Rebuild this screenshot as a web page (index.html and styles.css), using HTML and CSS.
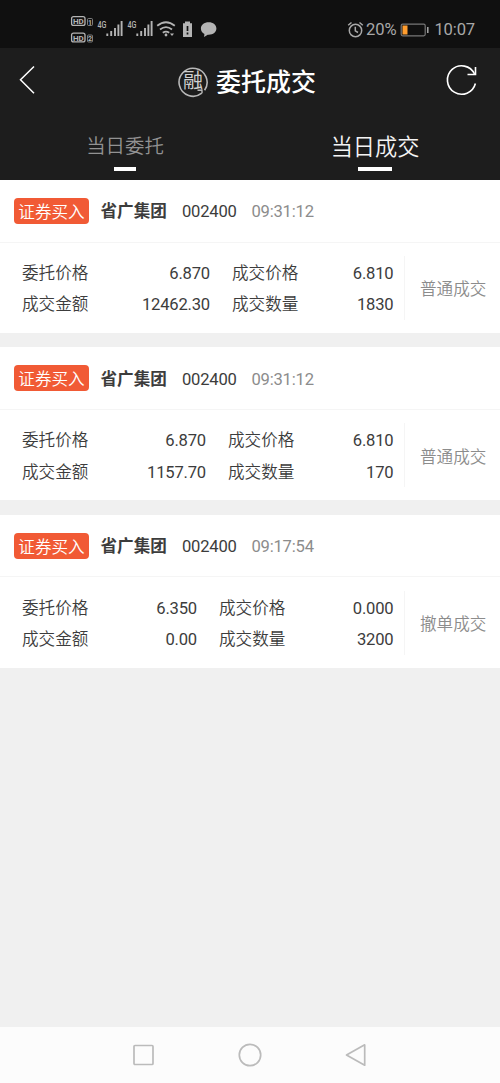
FILE: index.html
```html
<!DOCTYPE html>
<html lang="zh-CN">
<head>
<meta charset="utf-8">
<title>委托成交</title>
<link rel="stylesheet" href="styles.css">
</head>
<body>
<div class="screen">
  <div class="status">
    <svg class="status-left" width="160" height="48" viewBox="60 0 160 48">
      <g fill="none" stroke="#b4b4b4" stroke-width="1.3">
        <rect x="71.6" y="16.6" width="13.4" height="8.8" rx="2"/>
        <rect x="71.6" y="33.1" width="13.4" height="8.8" rx="2"/>
      </g>
      <g class="tiny">
        <text x="73" y="24" textLength="10.800" lengthAdjust="spacingAndGlyphs">HD</text><text x="73" y="40.500" textLength="10.800" lengthAdjust="spacingAndGlyphs">HD</text>
        <text x="88" y="24.600">1</text><text x="88" y="41.100">2</text>
      </g>
      <g fill="none" stroke="#999" stroke-width=".8"><rect x="87.500" y="18.500" width="5" height="7" rx="1"/><rect x="87.500" y="35" width="5" height="7" rx="1"/></g>
      <g class="net"><text x="97.500" y="27.500" textLength="9" lengthAdjust="spacingAndGlyphs">4G</text><text x="127.500" y="27.500" textLength="9" lengthAdjust="spacingAndGlyphs">4G</text></g>
      <path d="M107.300 33.500v2.500M111.200 31v5M115 28v8M118.400 24.500v11.500M121.600 21v15M137.300 33.500v2.500M141.200 31v5M145 28v8M148.400 24.500v11.500M151.600 21v15" stroke="#b4b4b4" stroke-width="1.900" fill="none"/>
      <g fill="none" stroke="#b4b4b4" stroke-width="1.800"><path d="M157.200 25.800q8.800-7.200 17.600 0"/><path d="M160 29.500q6-4.800 12 0"/><path d="M162.800 32.800q3.200-2.400 6.400 0"/></g>
      <circle cx="166" cy="35" r="1.400" fill="#b4b4b4"/><path d="M170 33.500l2 2.500 2-2.500z" fill="#b4b4b4"/>
      <path d="M185 21.500h5v1.800h2V37h-9V23.300h2z" fill="#b4b4b4"/>
      <path d="M187.500 26v5M187.500 32.500v2" stroke="#111" stroke-width="1.700"/>
      <path d="M208.700 22.200c4.500 0 7.700 2.700 7.700 6.300s-3.200 6.200-7.700 6.200l-1 0-3.600 2.300.3-3.100c-2.200-1.200-3.500-3-3.500-5.400 0-3.600 3.300-6.300 7.800-6.300z" fill="#b4b4b4"/>
    </svg>
    <div class="status-right">
      <svg class="alarm" width="18" height="18" viewBox="0 0 18 18" fill="none" stroke="#a8a8a8" stroke-width="1.500"><circle cx="8.500" cy="9.500" r="6.200"/><path d="M8.300 5.800v4l2.700 1.700M1.200 4.300l3.300-2.800M12.500 1.500l3.300 2.800"/></svg>
      <span class="charge">20%</span>
      <svg class="battery" width="30" height="16" viewBox="0 0 30 16"><rect x="1.200" y="2.200" width="24" height="11.600" rx="1.500" fill="none" stroke="#777" stroke-width="1.200"/><path d="M2.500 3.500h5v9h-5z" fill="#ff9d2e"/><path d="M27.800 5v6" stroke="#aaa" stroke-width="1.500"/></svg>
      <span class="clock">10:07</span>
    </div>
  </div>
  <header class="header">
    <svg class="back" width="20" height="32" viewBox="0 0 20 32"><path d="M17 2.500L3.500 15.700l13.500 13.600" fill="none" stroke="#fff" stroke-width="1.500"/></svg>
    <div class="title">
      <svg class="brand" width="32" height="32" viewBox="0 0 32 32"><path d="M24.800 27.200A14 14 0 1 1 27.600 24.200" fill="none" stroke="#b8b8b8" stroke-width="1.600"/><path d="M20.500 24.300h4.500v3" fill="none" stroke="#b8b8b8" stroke-width="1.400"/><text class="seal" x="6" y="22">融</text></svg>
      <h1>委托成交</h1>
    </div>
    <svg class="refresh" width="34" height="34" viewBox="0 0 34 34" fill="none" stroke="#fff" stroke-width="1.600"><path d="M30.400 20.500A14.200 14.200 0 1 1 29.500 11"/><path d="M30.500 4v7.500h-8"/></svg>
  </header>
  <nav class="tabs">
    <div class="tab"><span>当日委托</span></div>
    <div class="tab active"><span>当日成交</span></div>
  </nav>
  <main class="list">
    <section class="card">
      <div class="card-head"><span class="tag">证券买入</span><b class="name">省广集团</b><span class="code">002400</span><span class="time">09:31:12</span></div>
      <div class="card-body">
        <div class="figures wide"><span>委托价格</span><span class="num">6.870</span><span class="second">成交价格</span><span class="num">6.810</span><span>成交金额</span><span class="num">12462.30</span><span class="second">成交数量</span><span class="num">1830</span></div>
        <div class="state">普通成交</div>
      </div>
    </section>
    <section class="card">
      <div class="card-head"><span class="tag">证券买入</span><b class="name">省广集团</b><span class="code">002400</span><span class="time">09:31:12</span></div>
      <div class="card-body">
        <div class="figures medium"><span>委托价格</span><span class="num">6.870</span><span class="second">成交价格</span><span class="num">6.810</span><span>成交金额</span><span class="num">1157.70</span><span class="second">成交数量</span><span class="num">170</span></div>
        <div class="state">普通成交</div>
      </div>
    </section>
    <section class="card">
      <div class="card-head"><span class="tag">证券买入</span><b class="name">省广集团</b><span class="code">002400</span><span class="time">09:17:54</span></div>
      <div class="card-body">
        <div class="figures narrow"><span>委托价格</span><span class="num">6.350</span><span class="second">成交价格</span><span class="num">0.000</span><span>成交金额</span><span class="num">0.00</span><span class="second">成交数量</span><span class="num">3200</span></div>
        <div class="state">撤单成交</div>
      </div>
    </section>
  </main>
  <footer class="navbar">
    <svg width="24" height="24" viewBox="0 0 24 24"><rect x="2" y="2.500" width="19" height="19" rx="1"/></svg>
    <svg width="24" height="24" viewBox="0 0 24 24"><circle cx="12" cy="12" r="10.700"/></svg>
    <svg width="24" height="24" viewBox="0 0 24 24"><path d="M19.700 1.800v20.400L1.500 12z" stroke-linejoin="round"/></svg>
  </footer>
</div>
</body>
</html>
```
FILE: styles.css
```css
* { box-sizing: border-box; }
body { margin: 0; font-family: Roboto, "Noto Sans CJK SC", sans-serif; font-size: 16.6px; font-weight: 400; color: #3c3c3c; }
.screen { width: 500px; height: 1083px; display: flex; flex-direction: column; background: #f0f0f0; overflow: hidden; }
.status { height: 48px; flex: none; background: #101010; display: flex; justify-content: space-between; padding: 0 25px 0 60px; color: #a8a8a8; }
.status-left { display: block; }
.tiny { font: 700 7px Roboto, sans-serif; fill: #b4b4b4; }
.net { font: 500 9.5px Roboto, sans-serif; fill: #b4b4b4; }
.status-right { display: flex; align-items: center; padding-top: 11px; font-size: 16.6px; letter-spacing: -.15px; }
.charge { margin-left: 1px; }
.battery { margin-left: 4px; }
.clock { margin-left: 4px; }
.header { height: 66px; flex: none; background: #1d1d1d; display: flex; align-items: center; justify-content: space-between; padding: 0 21px 0 17px; }
.back { margin-bottom: 2px; }
.title { display: flex; align-items: center; gap: 7px; padding: 2px 0 0 11px; }
.seal { font: 400 20px "Noto Sans CJK SC", sans-serif; fill: #d0d0d0; }
h1 { margin: 0; padding-top: 2px; font-size: 25px; font-weight: 500; line-height: 36px; color: #fff; }
.refresh { margin-bottom: 3px; }
.tabs { height: 66px; flex: none; background: #1d1d1d; display: grid; grid-template-columns: 1fr 1fr; }
.tab { display: flex; flex-direction: column; align-items: center; justify-content: space-between; padding: 13px 0 11px; font-size: 19.4px; font-weight: 350; line-height: 40px; color: #929292; }
.tab::after { content: ""; width: 22px; height: 4px; background: #fff; }
.tab.active { font-size: 22.2px; color: #f4f4f4; }
.tab.active::after { width: 34px; }
.list { flex: 1; display: flex; flex-direction: column; gap: 14.4px; }
.card { height: 153px; background: #fff; }
.card-head { height: 62.500px; display: flex; align-items: center; padding-left: 14px; border-bottom: 1px solid #f5f5f5; line-height: 26px; }
.card-head > span:not(.tag), .name { padding-top: 3px; }
.tag { width: 75px; height: 26px; border-radius: 4px; background: #f15a35; color: #fff; font-weight: 350; text-align: center; line-height: 29px; }
.name { margin-left: 11.500px; font-weight: 700; }
.code { margin-left: 15px; width: 54.500px; letter-spacing: -.2px; }
.time { margin-left: 15px; color: #8c8c8c; letter-spacing: -.2px; }
.card-body { height: 90.500px; display: flex; align-items: center; }
.figures { width: 405px; height: 64px; padding: 0 10.500px 0 22px; display: grid; grid-template-rows: 31.400px 31.400px; font-weight: 350; line-height: 36.500px; border-right: 1px solid #f5f5f5; }
.wide { grid-template-columns: 70px 118px 90px 1fr; }
.medium { grid-template-columns: 70px 114px 90px 1fr; }
.narrow { grid-template-columns: 70px 105px 90px 1fr; }
.num { font-weight: 400; text-align: right; letter-spacing: -.2px; }
.second { padding-left: 22px; }
.state { flex: 1; padding: 1px 0 0 15px; color: #8c8c8c; font-weight: 350; }
.navbar { height: 56px; flex: none; background: #fcfcfc; display: flex; align-items: center; justify-content: center; gap: 82.500px; }
.navbar svg { fill: none; stroke: #bbb; stroke-width: 1.700; }
```
